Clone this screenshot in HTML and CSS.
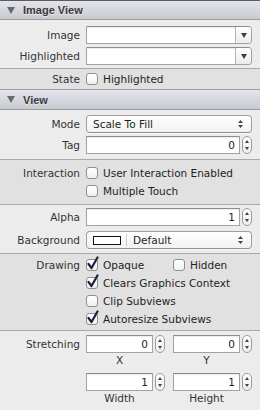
FILE: index.html
```html
<!DOCTYPE html>
<html lang="en">
<head>
<meta charset="UTF-8">
<meta name="viewport" content="width=device-width, initial-scale=1.0">
<link rel="stylesheet" href="styles.css">
<title>Image View Inspector</title>
</head>
<body>
  <div class="inspector">
    <div class="header first"><span class="disclosure"></span>Image View</div>
    <div class="group g-image">
      <div class="row">
        <div class="label">Image</div>
        <div class="combo"><div class="combo-text"></div><div class="combo-btn"><span class="tri"></span></div></div>
      </div>
      <div class="row">
        <div class="label">Highlighted</div>
        <div class="combo"><div class="combo-text"></div><div class="combo-btn"><span class="tri"></span></div></div>
      </div>
    </div>
    <div class="group alt g-state">
      <div class="row">
        <div class="label">State</div>
        <div class="check"><span class="box"></span>Highlighted</div>
      </div>
    </div>

    <div class="header"><span class="disclosure"></span>View</div>
    <div class="group g-mode">
      <div class="row">
        <div class="label">Mode</div>
        <div class="popup"><span class="popup-text">Scale To Fill</span><svg class="updown" width="7" height="10" viewBox="0 0 7 10"><path d="M3.5 1 L6 4 H1 Z M3.5 9 L6 6 H1 Z" fill="#444"/></svg></div>
      </div>
      <div class="row">
        <div class="label">Tag</div>
        <div class="num"><div class="field">0</div><div class="stepper"><svg width="8" height="16" viewBox="0 0 8 16"><path d="M4 3 L6 6 H2 Z M4 13 L6 10 H2 Z" fill="#444"/></svg></div></div>
      </div>
    </div>
    <div class="group alt g-interaction">
      <div class="row">
        <div class="label">Interaction</div>
        <div class="check"><span class="box"></span>User Interaction Enabled</div>
      </div>
      <div class="row">
        <div class="label"></div>
        <div class="check"><span class="box"></span>Multiple Touch</div>
      </div>
    </div>
    <div class="group g-alpha">
      <div class="row">
        <div class="label">Alpha</div>
        <div class="num"><div class="field">1</div><div class="stepper"><svg width="8" height="16" viewBox="0 0 8 16"><path d="M4 3 L6 6 H2 Z M4 13 L6 10 H2 Z" fill="#444"/></svg></div></div>
      </div>
      <div class="row">
        <div class="label">Background</div>
        <div class="popup"><span class="swatch"></span><span class="divider"></span><span class="popup-text">Default</span><svg class="updown" width="7" height="10" viewBox="0 0 7 10"><path d="M3.5 1 L6 4 H1 Z M3.5 9 L6 6 H1 Z" fill="#444"/></svg></div>
      </div>
    </div>
    <div class="group alt g-drawing">
      <div class="row">
        <div class="label">Drawing</div>
        <div class="pair">
          <div class="check"><span class="box checked"><svg width="14" height="15" viewBox="0 0 14 15"><path d="M2.5 8 L5.5 12 L11.5 1.5" fill="none" stroke="#1d2140" stroke-width="2.2" stroke-linecap="round" stroke-linejoin="round"/></svg></span>Opaque</div>
          <div class="check"><span class="box"></span>Hidden</div>
        </div>
      </div>
      <div class="row">
        <div class="label"></div>
        <div class="check"><span class="box checked"><svg width="14" height="15" viewBox="0 0 14 15"><path d="M2.5 8 L5.5 12 L11.5 1.5" fill="none" stroke="#1d2140" stroke-width="2.2" stroke-linecap="round" stroke-linejoin="round"/></svg></span>Clears Graphics Context</div>
      </div>
      <div class="row">
        <div class="label"></div>
        <div class="check"><span class="box"></span>Clip Subviews</div>
      </div>
      <div class="row">
        <div class="label"></div>
        <div class="check"><span class="box checked"><svg width="14" height="15" viewBox="0 0 14 15"><path d="M2.5 8 L5.5 12 L11.5 1.5" fill="none" stroke="#1d2140" stroke-width="2.2" stroke-linecap="round" stroke-linejoin="round"/></svg></span>Autoresize Subviews</div>
      </div>
    </div>
    <div class="group g-stretch">
      <div class="row tall">
        <div class="label">Stretching</div>
        <div class="pair">
          <div class="cell">
            <div class="num"><div class="field">0</div><div class="stepper"><svg width="8" height="16" viewBox="0 0 8 16"><path d="M4 3 L6 6 H2 Z M4 13 L6 10 H2 Z" fill="#444"/></svg></div></div>
            <div class="caption">X</div>
          </div>
          <div class="cell">
            <div class="num"><div class="field">0</div><div class="stepper"><svg width="8" height="16" viewBox="0 0 8 16"><path d="M4 3 L6 6 H2 Z M4 13 L6 10 H2 Z" fill="#444"/></svg></div></div>
            <div class="caption">Y</div>
          </div>
        </div>
      </div>
      <div class="row tall">
        <div class="label"></div>
        <div class="pair">
          <div class="cell">
            <div class="num"><div class="field">1</div><div class="stepper"><svg width="8" height="16" viewBox="0 0 8 16"><path d="M4 3 L6 6 H2 Z M4 13 L6 10 H2 Z" fill="#444"/></svg></div></div>
            <div class="caption">Width</div>
          </div>
          <div class="cell">
            <div class="num"><div class="field">1</div><div class="stepper"><svg width="8" height="16" viewBox="0 0 8 16"><path d="M4 3 L6 6 H2 Z M4 13 L6 10 H2 Z" fill="#444"/></svg></div></div>
            <div class="caption">Height</div>
          </div>
        </div>
      </div>
    </div>
  </div>
</body>
</html>
```

FILE: styles.css
```css
body {
  margin: 0;
  padding: 0;
  background-color: #ececec;
  font-family: "DejaVu Sans", sans-serif;
  font-size: 10.5px;
  color: #2b2b2b;
}

.inspector {
  border-top: 1px solid #5c5c5c;
  height: 409px;
  overflow: hidden;
}

/* section headers */
.header {
  display: flex;
  align-items: center;
  height: 19px;
  border-top: 1px solid #9d9d9d;
  border-bottom: 1px solid #9d9d9d;
  background: linear-gradient(#e4e5eb, #c8cad2);
  font-family: "Liberation Sans", Arial, sans-serif;
  font-weight: bold;
  font-size: 11px;
  color: #3a3a3a;
  text-shadow: 0 1px 0 rgba(255, 255, 255, 0.5);
}

.header.first {
  height: 18px;
  border-top: none;
}

.disclosure {
  width: 0;
  height: 0;
  margin: 0 8px 0 7px;
  border-left: 4px solid transparent;
  border-right: 4px solid transparent;
  border-top: 7px solid #6a6a6a;
}

/* groups */
.group {
  background-color: #ececec;
  border-bottom: 1px solid #a9a9a9;
  padding-right: 8px;
  display: flex;
  flex-direction: column;
}

.group.alt {
  background-color: #e1e1e1;
}

.g-image { padding-top: 6px; padding-bottom: 3px; gap: 3px; }
.g-state { height: 20px; justify-content: center; border-bottom: none; }
.g-mode { padding-top: 5px; padding-bottom: 5px; gap: 3px; }
.g-interaction { padding-top: 4px; padding-bottom: 4px; }
.g-alpha { padding-top: 3px; padding-bottom: 4px; gap: 5px; }
.g-drawing { padding-top: 2px; padding-bottom: 2px; }
.g-stretch { padding-top: 4px; gap: 7px; border-bottom: none; }

.row {
  display: grid;
  grid-template-columns: 80px 1fr;
  column-gap: 6px;
  align-items: center;
  height: 18px;
}

.row.tall {
  height: auto;
  align-items: start;
}

.row.tall .label {
  line-height: 18px;
}

.label {
  text-align: right;
  white-space: nowrap;
  color: #333;
}

/* combo box */
.combo {
  display: flex;
  height: 18px;
  box-sizing: border-box;
  border: 1px solid #a2a2a2;
  border-top-color: #8c8c8c;
  border-radius: 0 4px 4px 0;
  background-color: #fff;
  box-shadow: inset 0 1px 1px rgba(0, 0, 0, 0.08);
}

.combo-text {
  flex: 1;
}

.combo-btn {
  width: 15px;
  border-left: 1px solid #b4b4b4;
  border-radius: 0 3px 3px 0;
  background: linear-gradient(#ffffff, #ececec);
  display: flex;
  align-items: center;
  justify-content: center;
}

.tri {
  width: 0;
  height: 0;
  border-left: 3.5px solid transparent;
  border-right: 3.5px solid transparent;
  border-top: 5px solid #3c3c3c;
}

/* popup button */
.popup {
  display: flex;
  align-items: center;
  height: 18px;
  box-sizing: border-box;
  padding: 0 7px 0 6px;
  border: 1px solid #a0a0a0;
  border-bottom-color: #8e8e8e;
  border-radius: 4px;
  background: linear-gradient(#ffffff, #f1f1f1);
  box-shadow: 0 1px 0 rgba(255, 255, 255, 0.6);
  color: #1e1e1e;
}

.popup-text {
  flex: 1;
}

.updown {
  display: block;
}

.swatch {
  width: 26px;
  height: 7px;
  border: 1px solid #111;
  background-color: #fff;
  margin-right: 5px;
}

.divider {
  width: 1px;
  height: 12px;
  background-color: #c8c8c8;
  margin-right: 6px;
}

/* number field with stepper */
.num {
  display: grid;
  grid-template-columns: 1fr 10px;
  column-gap: 2px;
  height: 18px;
}

.field {
  box-sizing: border-box;
  height: 18px;
  border: 1px solid #a2a2a2;
  border-top-color: #8c8c8c;
  background-color: #fff;
  box-shadow: inset 0 1px 1px rgba(0, 0, 0, 0.08);
  text-align: right;
  padding-right: 4px;
  line-height: 16px;
  color: #1e1e1e;
}

.stepper {
  box-sizing: border-box;
  height: 18px;
  border: 1px solid #9c9c9c;
  border-radius: 5px;
  background: linear-gradient(#ffffff, #eeeeee);
  display: flex;
  align-items: center;
  justify-content: center;
}

.stepper svg {
  display: block;
}

/* checkboxes */
.check {
  display: flex;
  align-items: center;
  white-space: nowrap;
  color: #1e1e1e;
}

.box {
  position: relative;
  flex: none;
  width: 12px;
  height: 12px;
  box-sizing: border-box;
  margin-right: 5px;
  border: 1px solid #8f8f8f;
  border-radius: 3px;
  background: linear-gradient(#ffffff, #f0f0f0);
}

.box svg {
  position: absolute;
  left: -1px;
  top: -4px;
}

.pair {
  display: grid;
  grid-template-columns: 79px 79px;
  column-gap: 8px;
}

.caption {
  text-align: center;
  padding-right: 12px;
  line-height: 12px;
  margin-top: 1px;
  color: #333;
}
```
